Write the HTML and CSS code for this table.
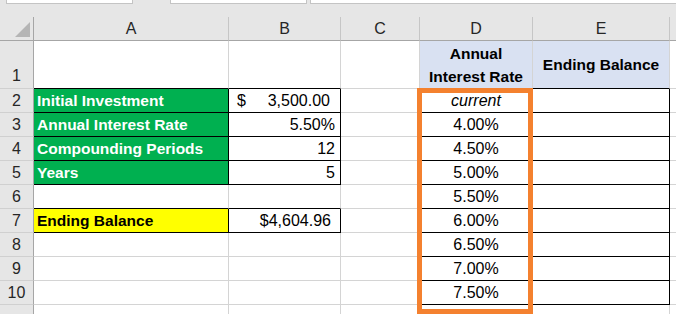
FILE: index.html
```html
<!DOCTYPE html>
<html>
<head>
<meta charset="utf-8">
<link rel="stylesheet" href="styles.css">
</head>
<body>
<div class="app">
  <div class="topbar">
    <div class="box box1"></div>
    <div class="box box2"></div>
    <div class="box box3"></div>
  </div>
  <div class="sheet">
    <div class="corner"><span class="tri"></span></div>
    <div class="h">A</div>
    <div class="h">B</div>
    <div class="h">C</div>
    <div class="h">D</div>
    <div class="h">E</div>
    <div class="h last"></div>

    <div class="rh tall">1</div>
    <div class="c tall bb"></div>
    <div class="c tall bb"></div>
    <div class="c tall"></div>
    <div class="c tall blue b ctr wrap bb">Annual<br>Interest Rate</div>
    <div class="c tall blue b ctr mid bb">Ending Balance</div>
    <div class="c tall"></div>

    <div class="rh">2</div>
    <div class="c green b bb br">Initial Investment</div>
    <div class="c acct bb br"><span>$</span><span>3,500.00</span></div>
    <div class="c br"></div>
    <div class="c ctr it bb br">current</div>
    <div class="c bb br"></div>
    <div class="c"></div>

    <div class="rh">3</div>
    <div class="c green b bb br">Annual Interest Rate</div>
    <div class="c r bb br">5.50%</div>
    <div class="c br"></div>
    <div class="c ctr bb br">4.00%</div>
    <div class="c bb br"></div>
    <div class="c"></div>

    <div class="rh">4</div>
    <div class="c green b bb br">Compounding Periods</div>
    <div class="c r bb br">12</div>
    <div class="c br"></div>
    <div class="c ctr bb br">4.50%</div>
    <div class="c bb br"></div>
    <div class="c"></div>

    <div class="rh">5</div>
    <div class="c green b bb br">Years</div>
    <div class="c r bb br">5</div>
    <div class="c br"></div>
    <div class="c ctr bb br">5.00%</div>
    <div class="c bb br"></div>
    <div class="c"></div>

    <div class="rh">6</div>
    <div class="c bb"></div>
    <div class="c bb"></div>
    <div class="c br"></div>
    <div class="c ctr bb br">5.50%</div>
    <div class="c bb br"></div>
    <div class="c"></div>

    <div class="rh">7</div>
    <div class="c yellow b bb br">Ending Balance</div>
    <div class="c r cur bb br">$4,604.96</div>
    <div class="c br"></div>
    <div class="c ctr bb br">6.00%</div>
    <div class="c bb br"></div>
    <div class="c"></div>

    <div class="rh">8</div>
    <div class="c"></div>
    <div class="c"></div>
    <div class="c br"></div>
    <div class="c ctr bb br">6.50%</div>
    <div class="c bb br"></div>
    <div class="c"></div>

    <div class="rh">9</div>
    <div class="c"></div>
    <div class="c"></div>
    <div class="c br"></div>
    <div class="c ctr bb br">7.00%</div>
    <div class="c bb br"></div>
    <div class="c"></div>

    <div class="rh">10</div>
    <div class="c"></div>
    <div class="c"></div>
    <div class="c br"></div>
    <div class="c ctr bb br">7.50%</div>
    <div class="c bb br"></div>
    <div class="c"></div>

    <div class="rh"></div>
    <div class="c"></div>
    <div class="c"></div>
    <div class="c"></div>
    <div class="c"></div>
    <div class="c"></div>
    <div class="c"></div>
  </div>
  <div class="highlight"></div>
</div>
</body>
</html>
```
FILE: styles.css
```css
html, body {
  margin: 0;
  padding: 0;
  background: #e6e6e6;
  overflow: hidden;
}
.app {
  position: relative;
  width: 676px;
  height: 314px;
  overflow: hidden;
  font-family: "Liberation Sans", Arial, sans-serif;
  font-size: 16px;
  color: #000;
}
.topbar {
  height: 17px;
  position: relative;
  background: #e6e6e6;
}
.box {
  position: absolute;
  top: -1px;
  height: 5px;
  background: #fff;
  border: 1px solid #c4c4c4;
  box-sizing: border-box;
}
.box1 { left: 6px; width: 127px; }
.box2 { left: 170px; width: 137px; }
.box3 { left: 310px; width: 380px; }

.sheet {
  display: grid;
  grid-template-columns: 34px 195px 112px 79px 113px 137px 20px;
  grid-template-rows: 24px 48px repeat(10, 24px) 24px;
  background: #fff;
}
.sheet > div {
  box-sizing: border-box;
  border-right: 1px solid #d4d4d4;
  border-bottom: 1px solid #d4d4d4;
  line-height: 23px;
  white-space: nowrap;
  overflow: hidden;
}
.corner {
  position: relative;
  background: #e6e6e6;
}
.sheet > .corner {
  border-right: 1px solid #a6a6a6;
  border-bottom: 1px solid #a6a6a6;
}
.tri {
  position: absolute;
  right: 3px;
  bottom: 3px;
  width: 0;
  height: 0;
  border-left: 15px solid transparent;
  border-bottom: 15px solid #b5b5b5;
}
.sheet > .h {
  background: #e6e6e6;
  color: #262626;
  text-align: center;
  border-right: 1px solid #c6c6c6;
  border-bottom: 1px solid #a6a6a6;
}
.sheet > .h.last { border-right: none; }
.sheet > .rh {
  background: #e6e6e6;
  color: #262626;
  text-align: center;
  border-right: 1px solid #a6a6a6;
  border-bottom: 1px solid #d0d0d0;
}
.sheet > .rh.tall {
  display: flex;
  align-items: flex-end;
  justify-content: center;
  padding-bottom: 1px;
}
.c { padding: 0 3px; }
.b { font-weight: bold; font-size: 15.5px; }
.it { font-style: italic; }
.ctr { text-align: center; }
.r { text-align: right; padding-right: 5px; }
.cur { padding-right: 9px; }
.acct {
  display: flex;
  justify-content: space-between;
  padding-left: 8px;
  padding-right: 10px;
}
.green { background: #00b050; color: #fff; }
.yellow { background: #ffff00; }
.blue { background: #d9e1f2; }
.sheet > .wrap {
  white-space: normal;
  padding-top: 1px;
}
.sheet > .mid {
  display: flex;
  align-items: center;
  justify-content: center;
}
.sheet > .bb { border-bottom: 1px solid #000; }
.sheet > .br { border-right: 1px solid #000; }

.highlight {
  position: absolute;
  left: 417px;
  top: 88px;
  width: 116px;
  height: 226px;
  box-sizing: border-box;
  border: 5px solid #f4812f;
}
```
